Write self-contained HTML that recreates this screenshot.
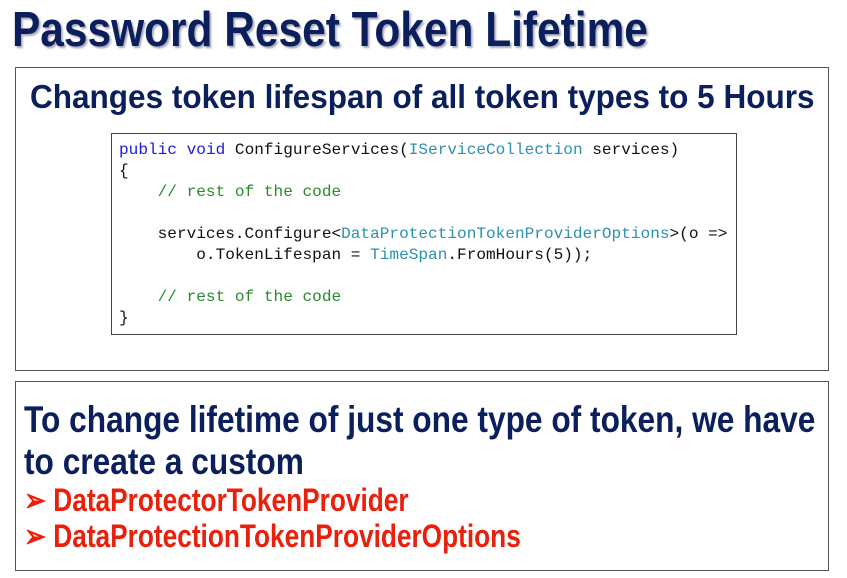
<!DOCTYPE html>
<html><head><meta charset="utf-8"><style>
body{margin:0;width:847px;height:578px;background:#fff;position:relative;overflow:hidden;font-family:"Liberation Sans",sans-serif}
.t{position:absolute;white-space:nowrap;transform-origin:0 0;font-weight:bold}
.box{position:absolute;border:1px solid #555;box-sizing:border-box}
.code{position:absolute;left:111px;top:133px;width:626px;height:202px;border:1px solid #444;box-sizing:border-box}
.code pre{margin:0;position:absolute;left:7px;top:6px;font-family:"Liberation Mono",monospace;font-size:16.1px;line-height:21px;color:#111}
.k{color:#1a1adc}.c{color:#2a8a2a}.ty{color:#2b91af}
</style></head><body>
<div class="t" style="left:12px;top:2px;font-size:49px;color:#0b1f5c;text-shadow:2px 2px 2px #aab;transform:scaleX(0.866)">Password Reset Token Lifetime</div>
<div class="box" style="left:15px;top:67px;width:814px;height:304px"></div>
<div class="t" style="left:30px;top:78px;font-size:33px;color:#0b1f5c;transform:scaleX(0.955)">Changes token lifespan of all token types to 5 Hours</div>
<div class="code"><pre><span class="k">public</span> <span class="k">void</span> ConfigureServices(<span class="ty">IServiceCollection</span> services)
{
    <span class="c">// rest of the code</span>

    services.Configure&lt;<span class="ty">DataProtectionTokenProviderOptions</span>&gt;(o =&gt;
        o.TokenLifespan = <span class="ty">TimeSpan</span>.FromHours(5));

    <span class="c">// rest of the code</span>
}</pre></div>
<div class="box" style="left:15px;top:381px;width:814px;height:190px"></div>
<div class="t" style="left:24px;top:399px;font-size:37px;color:#0b1f5c;transform:scaleX(0.856)">To change lifetime of just one type of token, we have</div>
<div class="t" style="left:24px;top:441px;font-size:37px;color:#0b1f5c;transform:scaleX(0.856)">to create a custom</div>
<div class="t" style="left:24px;top:481px;font-size:32px;color:#e8200c;transform:scaleX(0.82)">➢ DataProtectorTokenProvider</div>
<div class="t" style="left:24px;top:517px;font-size:32px;color:#e8200c;transform:scaleX(0.82)">➢ DataProtectionTokenProviderOptions</div>
</body></html>
